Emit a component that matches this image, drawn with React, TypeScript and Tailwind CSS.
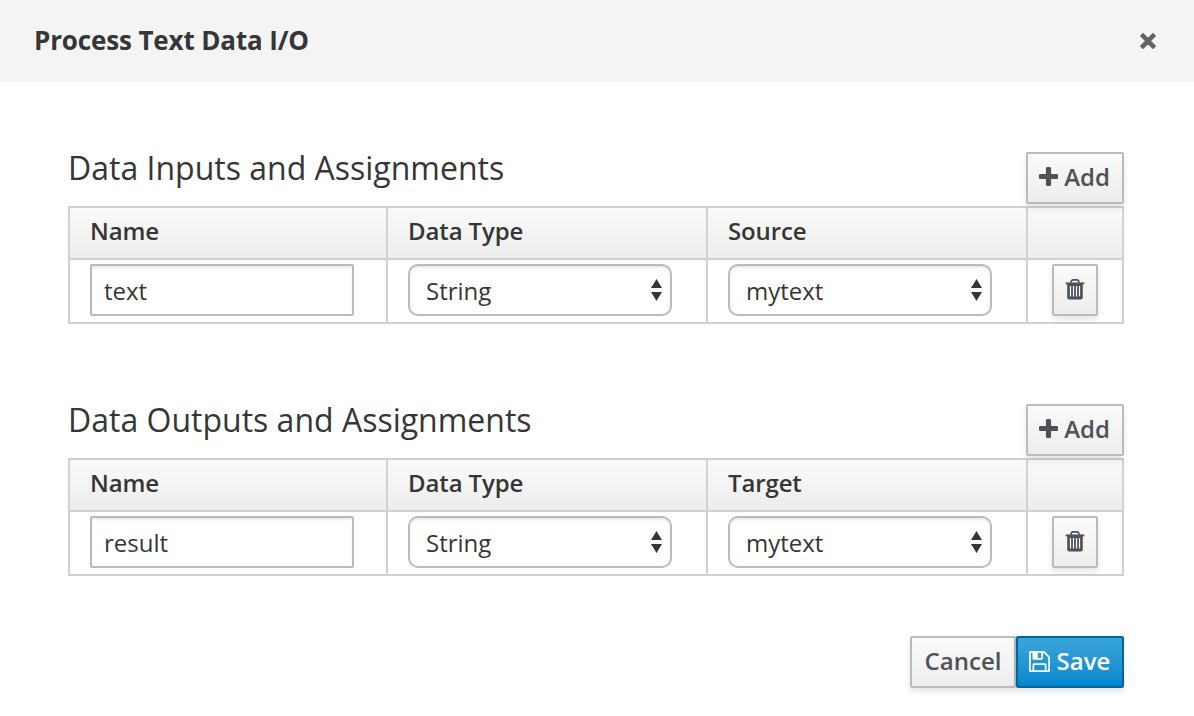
import React from "react";

const BUTTON =
  "flex items-center justify-center rounded-[2px] border-2 border-[#bbb] bg-linear-to-b from-[#fafafa] to-[#ededed] text-[#4d5258] shadow-[0_4px_6px_rgba(3,3,3,0.1)]";

function PlusIcon() {
  return (
    <svg className="mt-[-3px] h-[19px] w-[19px]" viewBox="0 128 1408 1408" fill="currentColor">
      <path d="M1408 736v192q0 40-28 68t-68 28h-416v416q0 40-28 68t-68 28h-192q-40 0-68-28t-28-68v-416h-416q-40 0-68-28t-28-68v-192q0-40 28-68t68-28h416v-416q0-40 28-68t68-28h192q40 0 68 28t28 68v416h416q40 0 68 28t28 68z" />
    </svg>
  );
}

function SaveIcon() {
  return (
    <svg className="mt-[-2px] h-[21px] w-[21px]" viewBox="0 128 1536 1536" fill="currentColor">
      <path d="M384 1536h768v-384h-768v384zm896 0h128v-896q0-14-10-38.500t-20-34.500l-281-281q-10-10-34-20t-39-10v416q0 40-28 68t-68 28h-576q-40 0-68-28t-28-68v-416h-128v1280h128v-416q0-40 28-68t68-28h832q40 0 68 28t28 68v416zm-384-928v-320q0-13-9.500-22.500t-22.500-9.500h-192q-13 0-22.500 9.500t-9.500 22.500v320q0 13 9.500 22.500t22.500 9.500h192q13 0 22.500-9.500t9.500-22.500zm640 32v928q0 40-28 68t-68 28h-1344q-40 0-68-28t-28-68v-1344q0-40 28-68t68-28h928q40 0 88 20t76 48l280 280q28 28 48 76t20 88z" />
    </svg>
  );
}

function TrashIcon() {
  return (
    <svg className="mt-[-2px] h-[22px] w-[20px]" viewBox="0 0 20 22" fill="none" stroke="currentColor">
      <path d="M6 4.800C6 2.800 6.600 1.900 8.200 1.900h3.600C13.400 1.900 14 2.800 14 4.800" strokeWidth="1.600" />
      <path d="M0.700 5.400h18.600" strokeWidth="1.900" />
      <path d="M2.200 5h15.600v14.600a2 2 0 0 1-2 2H4.200a2 2 0 0 1-2-2Z" fill="currentColor" stroke="none" />
      <path d="M5.500 8v10.500M8.500 8v10.500M11.500 8v10.500M14.500 8v10.500" stroke="#f4f4f4" strokeWidth="1.250" />
    </svg>
  );
}

function Select({ value }: { value: string }) {
  return (
    <button className="flex h-[52px] w-[264px] items-center justify-between rounded-[10px] border-2 border-[#bbb] bg-white pr-[8px] pl-4 shadow-[inset_0_2px_2px_rgba(3,3,3,0.075)]">
      <span className="mt-[2px]">{value}</span>
      <svg className="h-[22px] w-[11px]" viewBox="0 0 11 22" fill="#363636">
        <path d="M5.500 0 11 9H0ZM5.500 22 11 13H0Z" />
      </svg>
    </button>
  );
}

function Assignments({ title, last, name }: { title: string; last: string; name: string }) {
  return (
    <section className="h-[252px]">
      <div className="flex h-[54px] items-start justify-between">
        <h3 className="mt-[-2px] text-[32px] leading-[36px]">{title}</h3>
        <button className={`${BUTTON} h-[52px] w-[98px] gap-[6px] pr-[1px] font-semibold`}>
          <PlusIcon />
          <span className="mt-[-2px]">Add</span>
        </button>
      </div>
      <table className="w-[1056px] table-fixed border-separate border-spacing-0 border-t-2 border-l-2 border-[#d1d1d1] text-left">
        <colgroup>
          <col className="w-[318px]" />
          <col className="w-[320px]" />
          <col className="w-[320px]" />
          <col className="w-[96px]" />
        </colgroup>
        <thead>
          <tr className="h-[52px]">
            {["Name", "Data Type", last, ""].map((label) => (
              <th
                key={label}
                className="border-r-2 border-b-2 border-[#d1d1d1] bg-linear-to-b from-[#fafafa] to-[#ededed] p-0 pb-[4px] pl-5 font-semibold tracking-[-0.12px]"
              >
                {label}
              </th>
            ))}
          </tr>
        </thead>
        <tbody>
          <tr className="h-[64px]">
            <td className="border-r-2 border-b-2 border-[#d1d1d1] p-0 pt-1 pl-5 align-top">
              <input
                className="block h-[52px] w-[264px] rounded-[2px] border-2 border-[#bbb] bg-white px-3 shadow-[inset_0_2px_2px_rgba(3,3,3,0.075)] outline-none"
                defaultValue={name}
              />
            </td>
            <td className="border-r-2 border-b-2 border-[#d1d1d1] p-0 pt-1 pl-5 align-top">
              <Select value="String" />
            </td>
            <td className="border-r-2 border-b-2 border-[#d1d1d1] p-0 pt-1 pl-5 align-top">
              <Select value="mytext" />
            </td>
            <td className="border-r-2 border-b-2 border-[#d1d1d1] p-0 pt-1 pl-6 align-top">
              <button aria-label="Delete" className={`${BUTTON} h-[52px] w-[46px]`}>
                <TrashIcon />
              </button>
            </td>
          </tr>
        </tbody>
      </table>
    </section>
  );
}

export default function App() {
  return (
    <div className="h-[716px] w-[1194px] overflow-hidden bg-white font-['Open_Sans',sans-serif] text-[24px] leading-[40px] text-[#363636]">
      <header className="flex h-[82px] items-center justify-between bg-[#f4f4f4] pr-[38px] pl-[34px]">
        <h1 className="mt-[-2px] text-[26px] font-bold tracking-[-0.14px]">Process Text Data I/O</h1>
        <button aria-label="Close" className="text-[#646464]">
          <svg className="h-[16px] w-[16px]" viewBox="0 0 16 16" fill="currentColor" stroke="currentColor" strokeWidth="1.600" strokeLinejoin="round">
            <path d="M3 0.900 8 5.900l5-5L15.100 3l-5 5 5 5-2.100 2.100-5-5-5 5L0.900 13l5-5-5-5Z" />
          </svg>
        </button>
      </header>
      <main className="px-[68px] pt-[70px]">
        <div className="w-[1056px]">
          <Assignments title="Data Inputs and Assignments" last="Source" name="text" />
          <Assignments title="Data Outputs and Assignments" last="Target" name="result" />
        </div>
        <div className="mt-[-20px] flex w-[1056px] justify-end">
          <button className={`${BUTTON} h-[52px] w-[106px] font-semibold`}>
            <span className="mt-[-2px]">Cancel</span>
          </button>
          <button className="flex h-[52px] w-[108px] items-center justify-center gap-[7px] rounded-[2px] border-2 border-[#00659c] bg-linear-to-b from-[#39a5dc] to-[#0088ce] pr-[1px] font-semibold text-white shadow-[0_4px_6px_rgba(3,3,3,0.1)]">
            <SaveIcon />
            <span className="mt-[-2px]">Save</span>
          </button>
        </div>
      </main>
    </div>
  );
}
